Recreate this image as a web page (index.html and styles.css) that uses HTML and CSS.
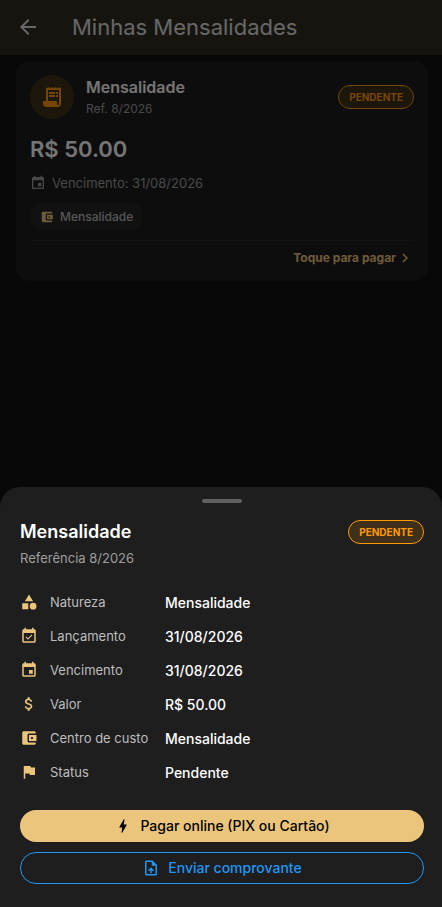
FILE: index.html
```
<!DOCTYPE html>
<html lang="pt-BR">
<head>
  <meta charset="utf-8">
  <title>Minhas Mensalidades</title>
  <meta name="viewport" content="width=device-width, initial-scale=1.0">
  <link rel="stylesheet" href="styles.css">
</head>
<body>
  <header class="app-bar">
    <button type="button" class="back-button" aria-label="Voltar">
      <svg class="icon-lg" viewBox="0 0 24 24"><path d="M20 11H7.83l5.59-5.59L12 4l-8 8 8 8 1.41-1.41L7.83 13H20v-2z"/></svg>
    </button>
    <h1>Minhas Mensalidades</h1>
  </header>

  <main class="list">
    <article class="card">
      <div class="card-header">
        <div class="avatar">
          <svg class="icon-lg" viewBox="0 0 24 24"><path d="M19.5 3.5L18 2l-1.5 1.5L15 2l-1.5 1.5L12 2l-1.5 1.5L9 2 7.5 3.5 6 2v14H3v3c0 1.66 1.34 3 3 3h12c1.66 0 3-1.34 3-3V2l-1.5 1.5zM19 19c0 .55-.45 1-1 1s-1-.45-1-1v-3H8V5h11v14z"/><path d="M9 7h6v2H9zM16 7h2v2h-2zM9 10h6v2H9zM16 10h2v2h-2z"/></svg>
        </div>
        <div class="card-title">
          <h2>Mensalidade</h2>
          <p>Ref. 8/2026</p>
        </div>
        <span class="badge">PENDENTE</span>
      </div>
      <p class="amount">R$ 50.00</p>
      <p class="due">
        <svg class="icon-sm" viewBox="0 0 24 24"><path d="M17 12h-5v5h5v-5zM16 1v2H8V1H6v2H5c-1.11 0-1.99.9-1.99 2L3 19c0 1.1.89 2 2 2h14c1.1 0 2-.9 2-2V5c0-1.1-.9-2-2-2h-1V1h-2zm3 18H5V8h14v11z"/></svg>
        Vencimento: 31/08/2026
      </p>
      <span class="chip">
        <svg class="icon-xs" viewBox="0 0 24 24"><path d="M21 18v1c0 1.1-.9 2-2 2H5c-1.11 0-2-.9-2-2V5c0-1.1.89-2 2-2h14c1.1 0 2 .9 2 2v1h-9c-1.11 0-2 .9-2 2v8c0 1.1.89 2 2 2h9zm-9-2h10V8H12v8zm4-2.5c-.83 0-1.5-.67-1.5-1.5s.67-1.5 1.5-1.5 1.5.67 1.5 1.5-.67 1.5-1.5 1.5z"/></svg>
        Mensalidade
      </span>
      <div class="card-footer">
        <a href="#detalhes" class="pay-link">
          Toque para pagar
          <svg class="icon-md" viewBox="0 0 24 24"><path d="M10 6L8.59 7.41 13.17 12l-4.58 4.59L10 18l6-6z"/></svg>
        </a>
      </div>
    </article>
  </main>

  <div class="scrim"></div>

  <section class="sheet" id="detalhes" role="dialog" aria-labelledby="sheet-title">
    <div class="handle"></div>
    <div class="sheet-header">
      <h2 id="sheet-title">Mensalidade</h2>
      <span class="badge">PENDENTE</span>
    </div>
    <p class="reference">Referência 8/2026</p>

    <dl class="details">
      <div class="row">
        <svg class="icon-md" viewBox="0 0 24 24"><path d="M12 2l-5.5 9h11zM3 13.5h8v8H3z"/><circle cx="17.5" cy="17.5" r="4.5"/></svg>
        <dt>Natureza</dt>
        <dd>Mensalidade</dd>
      </div>
      <div class="row">
        <svg class="icon-md" viewBox="0 0 24 24"><path d="M16.53 11.06L15.47 10l-4.88 4.88-2.12-2.12-1.06 1.06L10.59 17l5.94-5.94zM19 3h-1V1h-2v2H8V1H6v2H5c-1.11 0-1.99.9-1.99 2L3 19c0 1.1.89 2 2 2h14c1.1 0 2-.9 2-2V5c0-1.1-.9-2-2-2zm0 16H5V8h14v11z"/></svg>
        <dt>Lançamento</dt>
        <dd>31/08/2026</dd>
      </div>
      <div class="row">
        <svg class="icon-md" viewBox="0 0 24 24"><path d="M17 12h-5v5h5v-5zM16 1v2H8V1H6v2H5c-1.11 0-1.99.9-1.99 2L3 19c0 1.1.89 2 2 2h14c1.1 0 2-.9 2-2V5c0-1.1-.9-2-2-2h-1V1h-2zm3 18H5V8h14v11z"/></svg>
        <dt>Vencimento</dt>
        <dd>31/08/2026</dd>
      </div>
      <div class="row">
        <svg class="icon-md" viewBox="0 0 24 24"><path d="M11.8 10.9c-2.27-.59-3-1.2-3-2.15 0-1.09 1.01-1.85 2.7-1.85 1.78 0 2.44.85 2.5 2.1h2.21c-.07-1.72-1.12-3.3-3.21-3.81V3h-3v2.16c-1.94.42-3.5 1.68-3.5 3.61 0 2.31 1.91 3.46 4.7 4.13 2.5.6 3 1.48 3 2.41 0 .69-.49 1.79-2.7 1.79-2.06 0-2.87-.92-2.98-2.1h-2.2c.12 2.19 1.76 3.42 3.68 3.83V21h3v-2.15c1.95-.37 3.5-1.5 3.5-3.55 0-2.84-2.43-3.81-4.7-4.4z"/></svg>
        <dt>Valor</dt>
        <dd>R$ 50.00</dd>
      </div>
      <div class="row">
        <svg class="icon-md" viewBox="0 0 24 24"><path d="M21 18v1c0 1.1-.9 2-2 2H5c-1.11 0-2-.9-2-2V5c0-1.1.89-2 2-2h14c1.1 0 2 .9 2 2v1h-9c-1.11 0-2 .9-2 2v8c0 1.1.89 2 2 2h9zm-9-2h10V8H12v8zm4-2.5c-.83 0-1.5-.67-1.5-1.5s.67-1.5 1.5-1.5 1.5.67 1.5 1.5-.67 1.5-1.5 1.5z"/></svg>
        <dt>Centro de custo</dt>
        <dd>Mensalidade</dd>
      </div>
      <div class="row">
        <svg class="icon-md" viewBox="0 0 24 24"><path d="M14.4 6L14 4H5v17h2v-7h5.6l.4 2h7V6z"/></svg>
        <dt>Status</dt>
        <dd>Pendente</dd>
      </div>
    </dl>

    <div class="actions">
      <button type="button" class="button button-primary">
        <svg class="icon-md" viewBox="0 0 24 24"><path d="M11 21h-1l1-7H7.5c-.58 0-.57-.32-.38-.66.19-.34.05-.08.07-.12C8.48 10.94 10.42 7.54 13 3h1l-1 7h3.5c.49 0 .56.33.47.51l-.07.15C12.96 17.55 11 21 11 21z"/></svg>
        Pagar online (PIX ou Cartão)
      </button>
      <button type="button" class="button button-outline">
        <svg class="icon-md" viewBox="0 0 24 24"><path d="M14 2H6c-1.1 0-1.99.9-1.99 2L4 20c0 1.1.89 2 1.99 2H18c1.1 0 2-.9 2-2V8l-6-6zm4 18H6V4h7v5h5v11zM8 15.01l1.41 1.41L11 14.84V19h2v-4.16l1.59 1.59L16 15.01 12.01 11z"/></svg>
        Enviar comprovante
      </button>
    </div>
  </section>
</body>
</html>
```
FILE: styles.css
```
* {
  box-sizing: border-box;
}
body {
  margin: 0;
  min-height: 100vh;
  background-color: #121212;
  color: #fff;
  font-family: Inter, sans-serif;
  font-size: 13px;
  line-height: 20px;
}
h1, h2, p, dl, dt, dd {
  margin: 0;
}
svg {
  flex: none;
  fill: currentColor;
}
.icon-xs {
  width: 14px;
  height: 14px;
}
.icon-sm {
  width: 16px;
  height: 16px;
}
.icon-md {
  width: 18px;
  height: 18px;
}
.icon-lg {
  width: 24px;
  height: 24px;
}

/* App bar */
.app-bar {
  display: flex;
  align-items: center;
  gap: 24px;
  height: 55px;
  padding: 0 8px 2px;
  background-color: #2e2c22;
  color: #e0e0e0;
}
.back-button {
  display: flex;
  align-items: center;
  justify-content: center;
  width: 40px;
  height: 40px;
  padding: 0;
  border: none;
  background: none;
  color: inherit;
}
h1 {
  font-size: 22px;
  line-height: 28px;
  font-weight: 400;
}

/* Card */
.list {
  padding: 6px 14px 6px 16px;
}
.card {
  display: flex;
  flex-direction: column;
  align-items: flex-start;
  padding: 14px;
  border-radius: 14px;
  background-color: #1e1e1e;
}
.card-header {
  display: flex;
  align-items: center;
  align-self: stretch;
  gap: 12px;
}
.avatar {
  display: flex;
  align-items: center;
  justify-content: center;
  width: 44px;
  height: 44px;
  border-radius: 50%;
  background-color: rgba(255, 152, 0, 0.15);
  color: #ff9800;
}
.card-title {
  flex: 1;
}
.card-title h2 {
  font-size: 16px;
  line-height: 24px;
  font-weight: 600;
}
.card-title p {
  font-size: 12px;
  color: #9e9e9e;
}
.badge {
  padding: 0 10px;
  border: 1px solid #ff9800;
  border-radius: 12px;
  background-color: rgba(255, 152, 0, 0.15);
  color: #ff9800;
  font-size: 10px;
  line-height: 22px;
  font-weight: 700;
}
.amount {
  margin-top: 14px;
  font-size: 22px;
  line-height: 32px;
  font-weight: 600;
}
.due {
  display: flex;
  align-items: center;
  gap: 6px;
  margin-top: 8px;
  color: #9e9e9e;
}
.chip {
  display: flex;
  align-items: center;
  gap: 6px;
  margin-top: 10px;
  padding: 3px 10px;
  border-radius: 14px;
  background-color: #262626;
  color: #bdbdbd;
  font-size: 12px;
  line-height: 21px;
  font-weight: 500;
}
.chip svg {
  color: #ecc57c;
}
.card-footer {
  display: flex;
  justify-content: flex-end;
  align-self: stretch;
  margin-top: 10px;
  padding-top: 8px;
  border-top: 1px solid #2a2a2a;
}
.pay-link {
  display: flex;
  align-items: center;
  color: #ecc57c;
  font-size: 12px;
  line-height: 18px;
  font-weight: 700;
  text-decoration: none;
}

/* Bottom sheet */
.scrim {
  position: fixed;
  inset: 0;
  background-color: rgba(0, 0, 0, 0.54);
}
.sheet {
  position: fixed;
  left: 0;
  right: 0;
  bottom: 0;
  padding: 12px 18px 23px 20px;
  border-radius: 20px 20px 0 0;
  background-color: #1e1e1e;
}
.handle {
  width: 40px;
  height: 4px;
  margin: 0 auto;
  border-radius: 2px;
  background-color: #616161;
}
.sheet-header {
  display: flex;
  align-items: center;
  justify-content: space-between;
  margin-top: 16px;
}
.sheet-header h2 {
  font-size: 18px;
  line-height: 26px;
  font-weight: 600;
}
.reference {
  margin-top: 3px;
  color: #9e9e9e;
}
.details {
  margin-top: 18px;
}
.row {
  display: flex;
  align-items: flex-start;
  gap: 12px;
  padding: 7px 0;
  color: #ecc57c;
}
.row dt {
  width: 103px;
  color: #bdbdbd;
  line-height: 18px;
}
.row dd {
  color: #fff;
  font-size: 14px;
  font-weight: 500;
}
.actions {
  display: flex;
  flex-direction: column;
  gap: 10px;
  margin-top: 20px;
}
.button {
  display: flex;
  align-items: center;
  justify-content: center;
  gap: 8px;
  height: 32px;
  border: none;
  border-radius: 16px;
  font-family: inherit;
  font-size: 14px;
  line-height: 18px;
  font-weight: 500;
}
.button-primary {
  background-color: #ecc57c;
  color: #000;
}
.button-outline {
  border: 1px solid #2196f3;
  background: none;
  color: #2196f3;
}
```
